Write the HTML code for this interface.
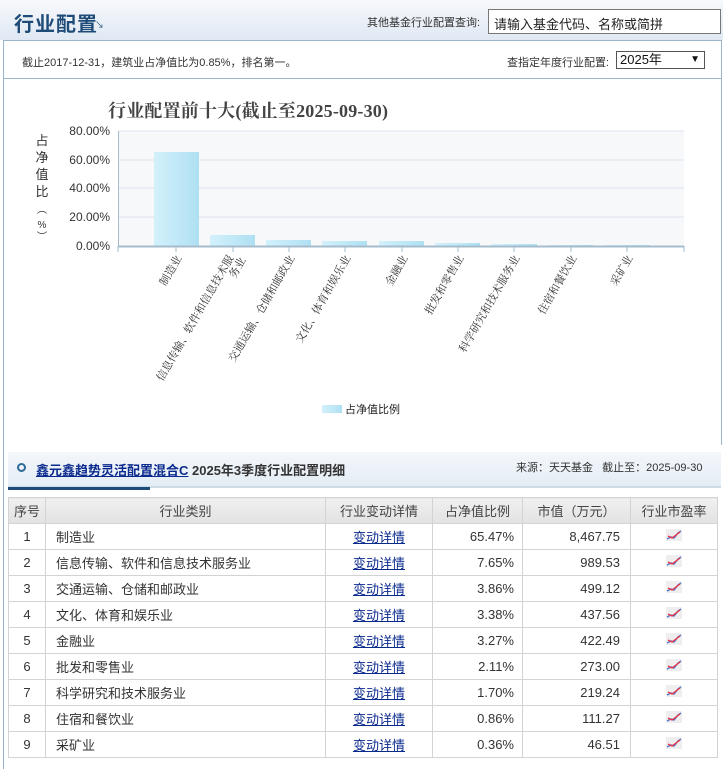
<!DOCTYPE html>
<html><head><meta charset="utf-8"><style>
*{margin:0;padding:0;box-sizing:border-box}
body{width:723px;height:769px;overflow:hidden;background:#fff;font-family:"Liberation Sans","Noto Sans CJK SC",sans-serif;font-size:12px;color:#333;position:relative}
.abs{position:absolute}
.hdr{left:0;top:0;width:723px;height:40px;background:linear-gradient(#f7f9fc,#dfe8f3);}
.panel{left:3px;top:40px;width:719px;height:405px;border:1px solid #9bb6cc;border-bottom:none}
table{border-collapse:collapse;position:absolute;left:8px;top:497px;width:710px}
td,th{border:1px solid #d3d3d3;height:26px;font-size:13px;font-weight:normal;color:#333}
th{background:linear-gradient(#f0f0f0,#e2e2e2);color:#444}
td a{color:#0b2a8e;text-decoration:underline}
</style></head><body>
<div class="abs hdr"></div>
<div class="abs" style="left:14px;top:8px;font-size:20px;color:#1f4b78;font-weight:bold;letter-spacing:1px">行业配置</div>
<div class="abs" style="left:95px;top:18px;font-size:9px;color:#1f4b78;">↘</div>
<div class="abs" style="left:367px;top:14px;font-size:11px;color:#333;">其他基金行业配置查询:</div>
<div class="abs" style="left:488px;top:9px;width:233px;height:25px;border:1px solid #777;background:#fff;font-size:13px;padding:4px 0 0 5px;color:#222">请输入基金代码、名称或简拼</div>
<div class="abs panel"></div>
<div class="abs" style="left:3px;top:78px;width:719px;border-top:1px solid #9bb6cc"></div>
<div class="abs" style="left:22px;top:54px;font-size:11px">截止2017-12-31，建筑业占净值比为0.85%，排名第一。</div>
<div class="abs" style="left:507px;top:54px;font-size:11px">查指定年度行业配置:</div>
<div class="abs" style="left:616px;top:51px;width:89px;height:18px;border:1px solid #555;font-size:13px;padding:0 0 0 3px;line-height:16px;color:#111">2025年<span style="position:absolute;right:4px;top:0;font-size:10px">▼</span></div>
<svg class="abs" style="left:0;top:80px" width="723" height="365">
<defs><linearGradient id="g" x1="0" x2="1"><stop offset="0" stop-color="#d3f1fb"/><stop offset="1" stop-color="#aee0f2"/></linearGradient></defs>
<text x="108" y="37" font-size="18" fill="#444" font-family="Liberation Serif,Noto Serif CJK SC,serif" font-weight="bold" textLength="280">行业配置前十大(截止至2025-09-30)</text>
<rect x="119" y="51" width="565" height="115" fill="#f7f8fa"/>
<g stroke="#dde5ee"><line x1="119" x2="684" y1="51" y2="51"/><line x1="119" x2="684" y1="80" y2="80"/><line x1="119" x2="684" y1="108" y2="108"/><line x1="119" x2="684" y1="137" y2="137"/></g>
<g font-size="12" fill="#333" text-anchor="end"><text x="110" y="55">80.00%</text><text x="110" y="84">60.00%</text><text x="110" y="112">40.00%</text><text x="110" y="141">20.00%</text><text x="110" y="170">0.00%</text></g>
<g font-size="13" fill="#333" text-anchor="middle"><text x="42" y="65">占</text><text x="42" y="82">净</text><text x="42" y="99">值</text><text x="42" y="116">比</text><text x="42" y="133" font-size="10">︵</text><text x="42" y="148" font-size="10">%</text><text x="42" y="160" font-size="10">︶</text></g>
<line x1="118.5" x2="118.5" y1="51" y2="166" stroke="#a6bccd"/>
<g fill="url(#g)">
<rect x="154" y="72" width="45" height="94"/><rect x="210" y="155" width="45" height="11"/><rect x="266" y="160" width="45" height="6"/><rect x="322" y="161" width="45" height="5"/><rect x="379" y="161" width="45" height="5"/><rect x="435" y="163" width="45" height="3"/><rect x="491" y="164" width="46" height="2"/><rect x="548" y="165" width="45" height="1"/><rect x="604" y="165" width="46" height="1"/></g>
<line x1="118" x2="684" y1="166.5" y2="166.5" stroke="#a6bccd" stroke-width="2"/>
<g stroke="#a6bccd"><line x1="118" x2="118" y1="166" y2="172"/><line x1="176" x2="176" y1="166" y2="172"/><line x1="233" x2="233" y1="166" y2="172"/><line x1="289" x2="289" y1="166" y2="172"/><line x1="345" x2="345" y1="166" y2="172"/><line x1="402" x2="402" y1="166" y2="172"/><line x1="458" x2="458" y1="166" y2="172"/><line x1="514" x2="514" y1="166" y2="172"/><line x1="571" x2="571" y1="166" y2="172"/><line x1="627" x2="627" y1="166" y2="172"/><line x1="684" x2="684" y1="166" y2="172"/></g>
<g font-size="11" fill="#333" text-anchor="end" font-family="Liberation Serif,Noto Serif CJK SC,serif">
<text transform="translate(182,178) rotate(-60)">制造业</text>
<text transform="translate(234,178) rotate(-60)">信息传输、软件和信息技术服</text>
<text transform="translate(246,180) rotate(-60)">务业</text>
<text transform="translate(295,178) rotate(-60)">交通运输、仓储和邮政业</text>
<text transform="translate(351,178) rotate(-60)">文化、体育和娱乐业</text>
<text transform="translate(408,178) rotate(-60)">金融业</text>
<text transform="translate(464,178) rotate(-60)">批发和零售业</text>
<text transform="translate(520,178) rotate(-60)">科学研究和技术服务业</text>
<text transform="translate(577,178) rotate(-60)">住宿和餐饮业</text>
<text transform="translate(633,178) rotate(-60)">采矿业</text>
</g>
<rect x="322" y="325" width="20" height="8" fill="url(#g)"/>
<text x="345" y="333" font-size="11" fill="#222">占净值比例</text>
</svg>
<div class="abs" style="left:3px;top:445px;width:1px;height:324px;background:#9bb6cc"></div>
<div class="abs" style="left:8px;top:452px;width:713px;height:36px;background:linear-gradient(#f4f7fb,#e4edf5);border-bottom:2px solid #cfdce8"></div>
<div class="abs" style="left:8px;top:487px;width:142px;height:3px;background:#1f4b78"></div>
<div class="abs" style="left:17px;top:463px;width:9px;height:9px;border:2px solid #2d6a98;border-radius:50%"></div>
<div class="abs" style="left:36px;top:460px;font-size:13px;font-weight:bold"><a style="color:#0b2a8e;text-decoration:underline">鑫元鑫趋势灵活配置混合C</a> <span style="color:#333">2025年3季度行业配置明细</span></div>
<div class="abs" style="left:516px;top:459px;font-size:11px">来源：天天基金&nbsp;&nbsp;&nbsp;截止至：2025-09-30</div>
<table>
<tr><th style="width:37px">序号</th><th style="width:280px">行业类别</th><th style="width:107px">行业变动详情</th><th style="width:90px">占净值比例</th><th style="width:108px">市值（万元）</th><th>行业市盈率</th></tr>
<tr><td align="center">1</td><td style="padding-left:10px">制造业</td><td align="center"><a>变动详情</a></td><td align="right" style="padding-right:8px">65.47%</td><td align="right" style="padding-right:10px">8,467.75</td><td align="center"><svg width="16" height="12" style="background:#eee"><polyline points="1,10 5,8 8,9 12,4 15,2" fill="none" stroke="#5577cc" stroke-width="1.5"/><polyline points="2,7 6,9 10,6 14,3" fill="none" stroke="#e34" stroke-width="1.3"/></svg></td></tr>
<tr><td align="center">2</td><td style="padding-left:10px">信息传输、软件和信息技术服务业</td><td align="center"><a>变动详情</a></td><td align="right" style="padding-right:8px">7.65%</td><td align="right" style="padding-right:10px">989.53</td><td align="center"><svg width="16" height="12" style="background:#eee"><polyline points="1,10 5,8 8,9 12,4 15,2" fill="none" stroke="#5577cc" stroke-width="1.5"/><polyline points="2,7 6,9 10,6 14,3" fill="none" stroke="#e34" stroke-width="1.3"/></svg></td></tr>
<tr><td align="center">3</td><td style="padding-left:10px">交通运输、仓储和邮政业</td><td align="center"><a>变动详情</a></td><td align="right" style="padding-right:8px">3.86%</td><td align="right" style="padding-right:10px">499.12</td><td align="center"><svg width="16" height="12" style="background:#eee"><polyline points="1,10 5,8 8,9 12,4 15,2" fill="none" stroke="#5577cc" stroke-width="1.5"/><polyline points="2,7 6,9 10,6 14,3" fill="none" stroke="#e34" stroke-width="1.3"/></svg></td></tr>
<tr><td align="center">4</td><td style="padding-left:10px">文化、体育和娱乐业</td><td align="center"><a>变动详情</a></td><td align="right" style="padding-right:8px">3.38%</td><td align="right" style="padding-right:10px">437.56</td><td align="center"><svg width="16" height="12" style="background:#eee"><polyline points="1,10 5,8 8,9 12,4 15,2" fill="none" stroke="#5577cc" stroke-width="1.5"/><polyline points="2,7 6,9 10,6 14,3" fill="none" stroke="#e34" stroke-width="1.3"/></svg></td></tr>
<tr><td align="center">5</td><td style="padding-left:10px">金融业</td><td align="center"><a>变动详情</a></td><td align="right" style="padding-right:8px">3.27%</td><td align="right" style="padding-right:10px">422.49</td><td align="center"><svg width="16" height="12" style="background:#eee"><polyline points="1,10 5,8 8,9 12,4 15,2" fill="none" stroke="#5577cc" stroke-width="1.5"/><polyline points="2,7 6,9 10,6 14,3" fill="none" stroke="#e34" stroke-width="1.3"/></svg></td></tr>
<tr><td align="center">6</td><td style="padding-left:10px">批发和零售业</td><td align="center"><a>变动详情</a></td><td align="right" style="padding-right:8px">2.11%</td><td align="right" style="padding-right:10px">273.00</td><td align="center"><svg width="16" height="12" style="background:#eee"><polyline points="1,10 5,8 8,9 12,4 15,2" fill="none" stroke="#5577cc" stroke-width="1.5"/><polyline points="2,7 6,9 10,6 14,3" fill="none" stroke="#e34" stroke-width="1.3"/></svg></td></tr>
<tr><td align="center">7</td><td style="padding-left:10px">科学研究和技术服务业</td><td align="center"><a>变动详情</a></td><td align="right" style="padding-right:8px">1.70%</td><td align="right" style="padding-right:10px">219.24</td><td align="center"><svg width="16" height="12" style="background:#eee"><polyline points="1,10 5,8 8,9 12,4 15,2" fill="none" stroke="#5577cc" stroke-width="1.5"/><polyline points="2,7 6,9 10,6 14,3" fill="none" stroke="#e34" stroke-width="1.3"/></svg></td></tr>
<tr><td align="center">8</td><td style="padding-left:10px">住宿和餐饮业</td><td align="center"><a>变动详情</a></td><td align="right" style="padding-right:8px">0.86%</td><td align="right" style="padding-right:10px">111.27</td><td align="center"><svg width="16" height="12" style="background:#eee"><polyline points="1,10 5,8 8,9 12,4 15,2" fill="none" stroke="#5577cc" stroke-width="1.5"/><polyline points="2,7 6,9 10,6 14,3" fill="none" stroke="#e34" stroke-width="1.3"/></svg></td></tr>
<tr><td align="center">9</td><td style="padding-left:10px">采矿业</td><td align="center"><a>变动详情</a></td><td align="right" style="padding-right:8px">0.36%</td><td align="right" style="padding-right:10px">46.51</td><td align="center"><svg width="16" height="12" style="background:#eee"><polyline points="1,10 5,8 8,9 12,4 15,2" fill="none" stroke="#5577cc" stroke-width="1.5"/><polyline points="2,7 6,9 10,6 14,3" fill="none" stroke="#e34" stroke-width="1.3"/></svg></td></tr>
</table>
</body></html>
